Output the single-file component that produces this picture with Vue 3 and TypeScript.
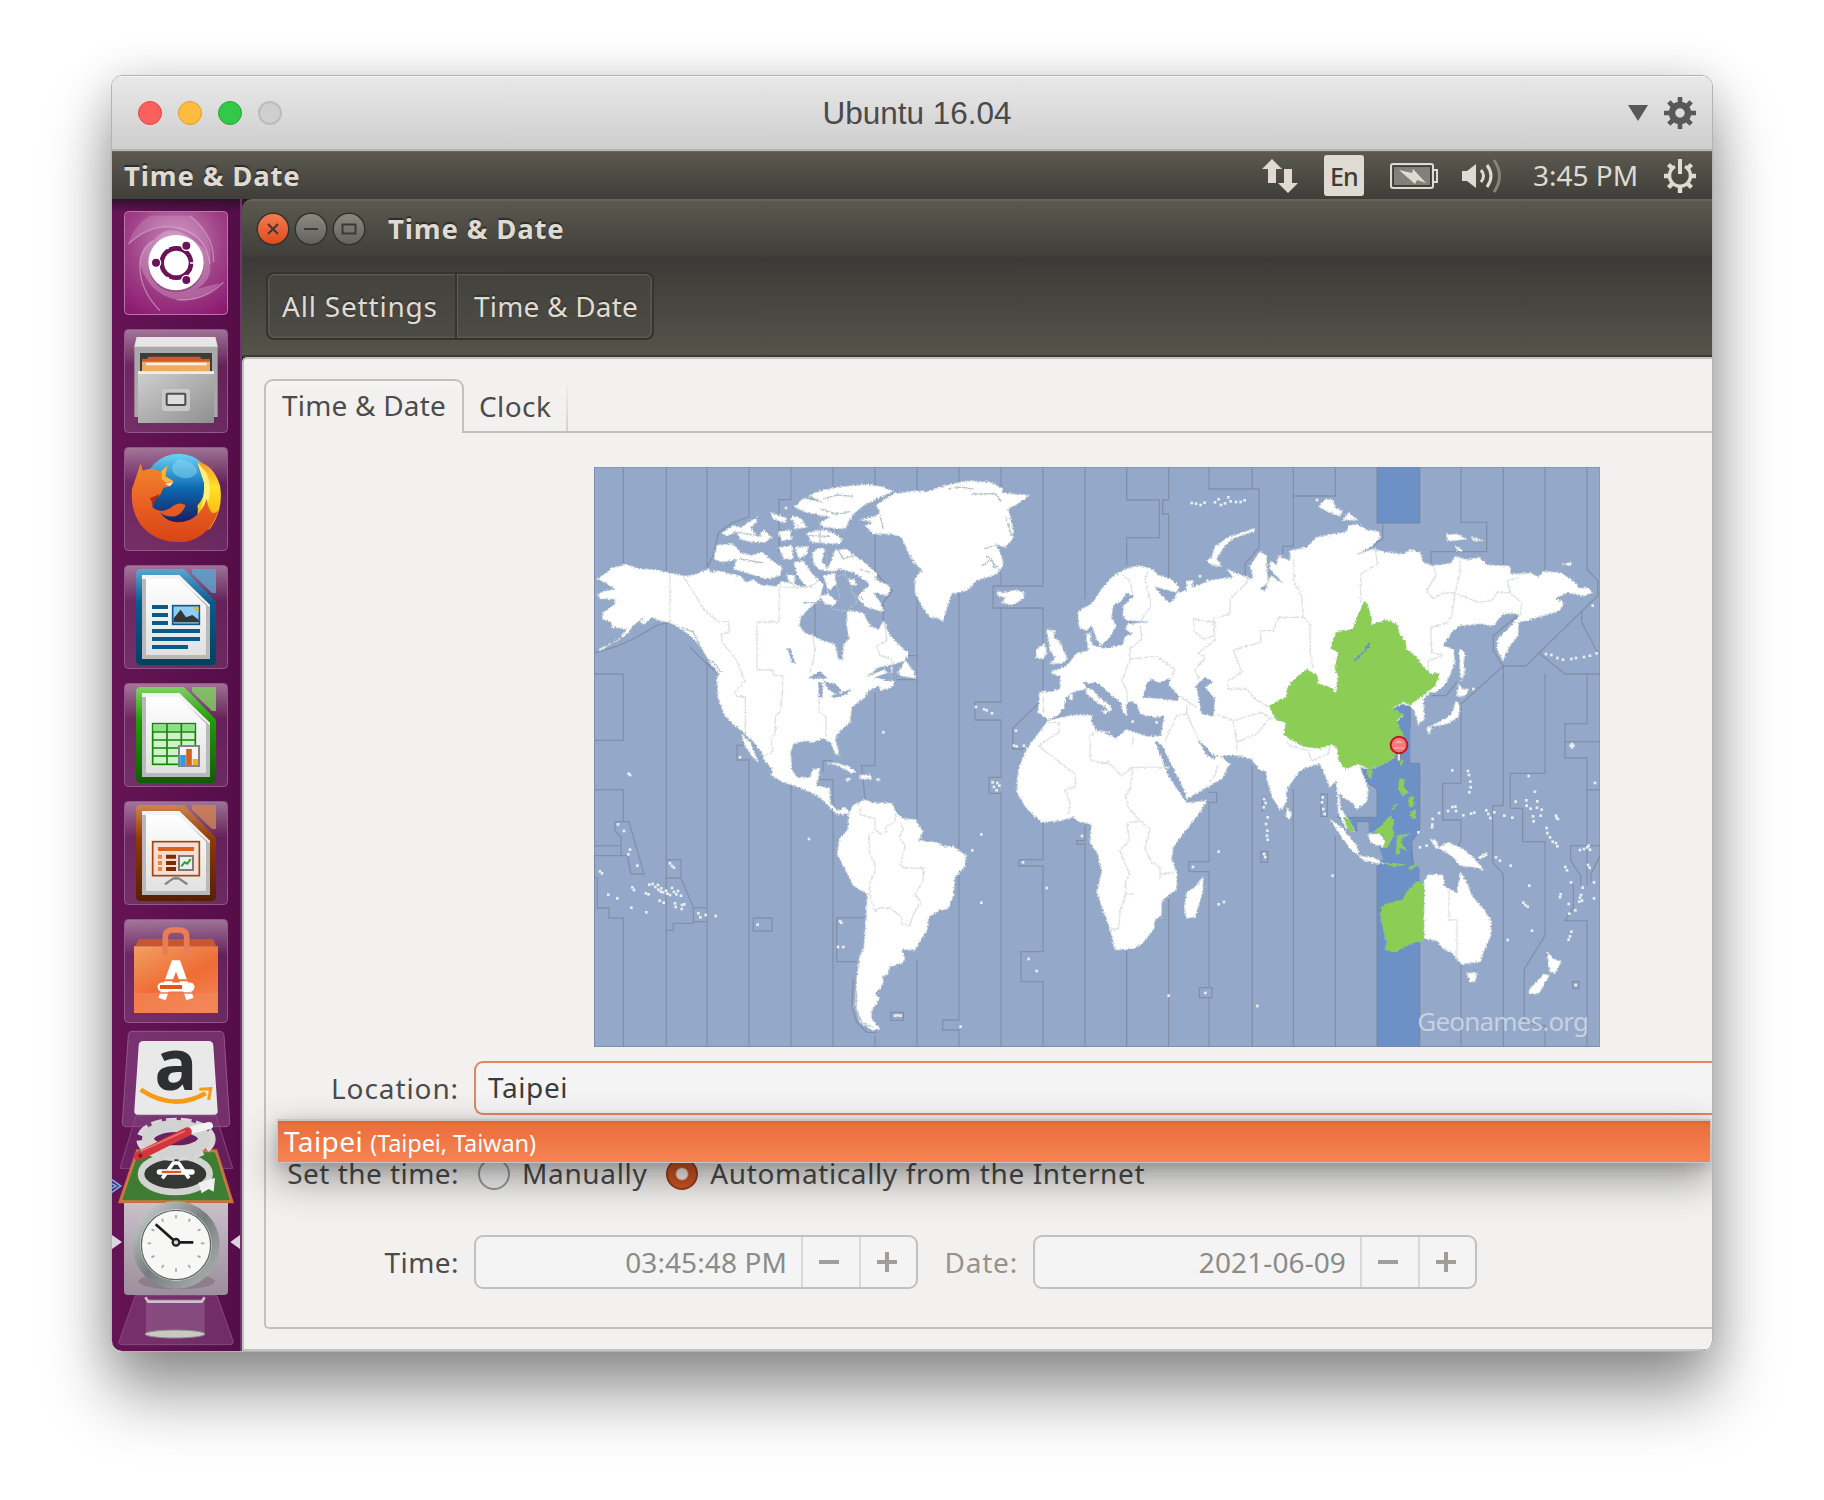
<script setup lang="ts">
type Zone = { d: string }

// Time-zone boundaries, western half then eastern half (shifted by 1500 units)
const zonesWest: Zone[] = [
  'M12 24V1763', 'M100 24V318', 'M12 582L80 562L130 540L205 497L240 490', 'M12 645H100V844H12', 'M12 992H100V1088',
  'M75 1088H117L162 1245H123L112 1190H93V1135L75 1115ZM12 1160H93M12 1190H115', 'M12 1190V1255H22V1347H57V1377H100V1763',
  'M229 24V340M229 495V1763', 'M229 1202H273V1257H229M273 1257L310 1345V1393H250V1414H229', 'M310 1346H351M310 1388H351',
  'M351 24V325L370 290L385 222L420 195L477 173M351 610V1763', 'M477 24V173M477 900V1763M477 903H441V859H460',
  'M603 24V122H567V278M603 980V1763', 'M729 24V100M729 905H699V940M680 962H729V1763M729 1062', 'M740 1376H832M740 1376V1508H800',
  'M855 24V100M855 220V340L908 395L880 430V490M855 700V920H815L825 1020M855 1730V1763', 'M981 24V95M981 400V590H950M981 590V662H920M981 662V1080M981 1500V1763',
  'M1107 24V70M1107 400V1683H1058V1713H1107V1763', 'M1233 24V95M1233 340V381H1359M1359 24V381M1209 381H1240M1209 381V447H1359V720L1268 808V870H1300',
  'M1233 447V729H1155V783H1233V955H1197V1003H1233V1763', 'M1359 1090V1202H1287V1221H1359V1478H1293V1568H1359V1763', 'M1485 24V420M1485 1088V1145H1460V1155H1485V1763',
  'M490 1377H546V1416H490ZM903 1660H940V1684H903Z', 'M675 430V540M300 565L330 595L380 640', 'M790 1560L785 1640L800 1690L830 1720H860',
].map(d => ({ d }))

const zonesEast: Zone[] = [
  'M110 24V123H208V236H110V320', 'M236 24V123H218V165H236V360', 'M357 24V90H507V265L465 315V350', 'M487 24V90',
  'M610 24V262H578V285M610 111H736V24', 'M861 24V192H989V24', 'M878 192V240L840 265', 'M1113 24V190H1190V278H1023V315',
  'M1240 24V320', 'M1365 24V340', 'M1491 24V330L1523 365V410L1307 621H1240L1210 575V530L1290 465', 'M1475 455V490L1525 585',
  'M1348 583L1425 645H1530', 'M1240 621L1113 735V973H1058V1083H1113V1145L1105 1160', 'M1100 670L1068 710H1025', 'M1240 621V1040H1208V1210L1240 1245V1763',
  'M1365 645V943H1261V1048H1298V1148H1365V1430L1303 1530V1690L1365 1700V1763', 'M1491 645V794H1425V897H1491V1280M1425 848H1530', 'M1491 993H1530',
  'M1530 1160H1442V1205L1472 1250V1280M1530 1190L1503 1245V1270M1450 1275V1345L1425 1385H1491V1763', 'M961 740V805', 'M950 913H989V1110L965 1150V1210',
  'M861 1075V990L830 970M740 1075H861M800 1120V1088H838V1120', 'M736 1130V1763', 'M610 990V1763', 'M487 920V1763', 'M530 1015H517V1060M513 1177H533V1210H513Z', 'M693 1005H712V1072H693Z',
  'M357 1000H380V1030H357V1208H297V1238H357V1586M328 1586H366V1616H328ZM357 1616V1763', 'M236 1320V1763', 'M110 1475V1763', 'M861 1220V1763M989 1450V1763', 'M1113 1520V1763', 'M1448 1568H1467V1589H1448Z', 'M3 1090V1140', 'M12 24H1530V1763H-1488V24Z',
].map(d => ({ d }))

const landWest: string[] = [
  // North America
  'M22 360L50 340L62 328L110 316L150 330L190 332L235 340L285 352L320 345L355 330L362 340L385 335L420 345L450 350L470 370L490 362L512 378L560 382L575 367L600 372L640 385L665 380L672 350L700 375L690 420L660 445L632 475L628 500L645 522L672 532L690 542L735 556L745 600L757 603L760 558L778 540L770 500L772 455L800 458L820 462L840 500L865 512L880 488L900 530L930 560L955 582L945 605L905 617L868 625L830 652L885 632L895 660L915 668L905 685L872 695L866 680L835 695L825 715L785 745L780 790L745 822L735 840L748 885L738 887L722 850L700 838L670 850L640 846L610 855L602 880L605 930L620 955L660 955L668 932L690 928L685 955L678 980L720 987L720 1035L745 1055L765 1045L778 1060L770 1066L740 1065L710 1035L690 1015L650 995L620 982L580 970L545 950L545 930L525 905L515 880L492 850L460 820L435 800L405 770L385 720L380 660L388 645L360 610L330 560L300 530L260 500L235 490L210 485L185 475L165 495L150 490L160 475L130 500L105 530L70 550L30 575L25 572L90 540L110 510L65 505L65 490L35 480L40 460L75 435L75 420L30 420L22 405L50 395L75 390L45 370Z',
  'M455 825L480 850L505 908L490 897L466 862Z',
  // Greenland
  'M812 182L855 172L870 160L858 138L910 105L980 95L1010 98L1070 78L1140 65L1200 70L1240 90L1235 102L1280 106L1318 108L1290 130L1255 150L1262 180L1270 215L1268 240L1245 265L1215 255L1235 290L1240 320L1220 345L1160 365L1130 395L1085 405L1070 450L1058 487L1045 478L1020 475L995 440L975 400L975 360L995 330L968 310L950 270L935 235L905 225L850 225L825 200L850 190Z',
  'M1223 395L1240 402L1275 393L1303 400L1300 420L1265 438L1235 430L1245 417L1224 410Z',
  // Canadian archipelago
  'M655 110L690 95L740 85L830 76L880 84L910 97L870 115L820 140L790 165L775 190L765 210L700 205L690 190L720 175L650 160L615 145L640 118L700 130Z',
  'M612 210L650 205L640 190L615 182ZM650 222L700 212L730 222L755 240L750 255L665 250Z',
  'M540 160L590 178L585 192L550 180ZM598 178L615 170L640 185L625 200ZM565 218L600 212L605 240L575 245Z',
  'M395 222L430 200L455 205L500 175L500 190L480 205L505 235L520 212L545 235L525 250L480 248L450 240L440 218L410 232Z',
  'M372 300L380 258L430 255L450 280L485 290L515 278L540 300L575 325L570 350L530 360L480 345L430 330L440 300L400 310Z',
  'M567 265L605 260L610 300L580 300ZM615 265L655 262L650 285L628 300ZM612 310L640 305L660 335L685 370L650 385L620 345ZM590 345L615 350L612 375L598 368Z',
  'M668 280L690 265L705 270L695 310L715 325L735 275L770 270L800 295L830 315L860 345L855 360L905 385L890 410L850 400L870 430L880 458L830 445L800 415L820 395L840 375L790 340L750 330L725 338L685 330L670 310Z',
  'M700 350L735 342L740 375L715 395ZM690 412L715 405L745 430L740 440L705 435ZM775 360L795 362L800 378L780 382Z',
  'M925 640L945 605L970 635L977 658L930 650Z',
  // Caribbean
  'M712 912L740 912L780 925L798 940L785 942L745 920ZM812 948L842 948L845 960L812 960ZM768 958h12v6h-12ZM860 958h10v6h-10Z',
  // South America
  'M775 1065L790 1038L825 1022L850 1032L905 1032L918 1060L940 1080L975 1080L1000 1120L985 1145L1040 1150L1060 1162L1090 1163L1128 1190L1125 1220L1095 1255L1090 1310L1072 1350L1050 1353L1015 1375L1012 1410L975 1473L935 1472L945 1500L938 1513L900 1522L895 1545L878 1552L880 1570L868 1592L855 1605L868 1620L845 1655L845 1680L870 1710L845 1712L810 1690L795 1640L800 1560L808 1500L822 1460L828 1380L832 1305L790 1280L765 1230L742 1185L748 1140L775 1110Z',
  // British Isles
  'M1370 512L1395 515L1390 535L1408 545L1432 600L1420 612L1380 615L1395 595L1380 575ZM1340 570L1365 552L1370 580L1362 598L1338 598Z',
]

const landEast: string[] = [
  // Eurasia and Africa
  'M-35 460L-25 450L5 435L35 390L70 350L95 338L120 325L150 320L185 330L205 348L245 362L268 385L258 400L215 388L195 385L215 410L235 430L250 425L262 400L290 395L290 365L310 365L305 385L370 362L430 355L410 330L470 355L490 360L480 320L510 278L530 290L530 325L535 370L510 390L525 395L542 350L578 372L540 330L542 305L560 320L565 290L600 305L600 275L650 265L680 235L770 218L775 200L800 195L830 212L865 218L872 235L845 262L805 285L850 270L890 280L940 285L960 272L990 280L1000 310L1025 320L1085 312L1095 292L1130 302L1170 296L1190 318L1260 322L1262 345L1325 342L1345 355L1360 338L1410 340L1450 365L1470 390L1490 383L1508 400L1480 412L1435 400L1395 418L1420 430L1410 455L1360 470L1310 485L1285 490L1285 530L1260 560L1238 605L1222 570L1222 540L1250 515L1288 470L1275 463L1240 465L1210 500L1170 495L1110 500L1085 520L1058 560L1090 572L1095 610L1070 670L1040 700L1020 700L1000 720L1003 780L985 797L975 760L960 740L935 735L905 750L940 770L920 790L935 830L930 870L905 900L870 920L840 930L810 925L820 950L835 990L830 1030L800 1050L790 1035L755 1010L748 1000L752 1050L775 1080L795 1118L770 1110L745 1065L742 1000L738 965L720 985L710 960L690 915L665 920L630 935L590 990L590 1030L570 1055L545 1010L530 960L528 935L510 935L485 900L440 890L390 890L420 915L395 960L350 985L290 1020L290 1032L350 1025L330 1060L290 1110L250 1165L245 1200L260 1240L260 1290L215 1325L215 1370L195 1382L192 1410L160 1450L130 1470L75 1473L60 1410L45 1370L20 1300L35 1240L25 1190L0 1150L3 1095L-30 1090L-50 1075L-90 1085L-145 1090L-190 1050L-220 1000L-215 930L-190 870L-160 830L-130 790L-125 782L-155 760L-152 700L-110 697L-90 690L-90 655L-118 640L-70 620L-40 583L-5 575L-12 525L2 520L5 545L20 540L5 500L-10 515L-33 505Z',
  'M350 305L365 295L375 262L420 232L495 208L490 218L430 238L400 265L380 300L395 322L365 318Z',
  'M685 145L705 122L730 122L735 145L757 155L750 172L715 158ZM758 185L775 160L803 182ZM1068 228L1100 225L1130 240L1075 248ZM1145 235L1180 245L1150 246ZM1095 262L1120 275L1105 278ZM1418 315L1445 310L1440 320Z',
  'M1108 570L1125 580L1120 620L1125 635L1115 665L1110 640ZM1098 710L1105 690L1105 675L1118 690L1138 690L1125 710L1108 712ZM1098 725L1110 740L1105 775L1070 795L1040 800L1015 805L1060 782L1085 765ZM1008 808L1025 803L1018 828Z',
  'M590 1045L605 1065L600 1080L588 1075ZM340 1250L338 1300L315 1375L290 1378L283 1350L290 1300L320 1280Z',
  'M720 1080L760 1110L800 1160L808 1190L785 1175L745 1120ZM805 1192L850 1195L882 1215L830 1208ZM835 1125L870 1125L888 1150L880 1165L840 1150Z',
  'M1020 1140L1040 1145L1045 1165L1075 1150L1120 1170L1155 1200L1180 1232L1150 1225L1110 1220L1090 1195L1060 1175L1035 1165ZM1165 1195L1190 1180L1192 1190L1170 1200Z',
  'M1002 1265L1015 1245L1060 1248L1062 1280L1100 1302L1112 1240L1130 1270L1145 1310L1180 1350L1203 1385L1203 1430L1180 1480L1172 1508L1115 1515L1085 1480L1060 1470L1040 1445L1002 1440Z',
  'M1130 1542L1162 1542L1155 1568L1142 1570ZM1372 1478L1390 1500L1413 1508L1395 1545L1378 1535ZM1362 1545L1378 1550L1345 1605L1318 1603L1316 1592Z',
]

const greens: string[] = [
  'M823 427L833 440L845 480L842 497L870 490L888 482L920 495L930 530L945 545L950 573L975 590L1000 625L1020 645L1048 643L1035 680L1000 708L960 738L940 728L905 748L925 760L942 768L920 785L940 830L935 870L900 905L870 920L840 930L805 915L765 930L745 900L742 865L725 855L690 868L640 862L600 840L582 828L588 790L560 783L537 742L570 722L592 715L592 685L620 655L650 632L680 648L685 675L720 685L738 703L745 650L735 630L745 580L722 568L740 520L790 510L800 478Z',
  'M830 932L848 935L842 962L832 945ZM928 895L940 905L932 920ZM930 960L943 960L940 985L955 1000L940 1010L925 990ZM955 1020L970 1010L972 1040L958 1045ZM960 1060L975 1050L978 1075L965 1078ZM905 1050L922 1032L908 1055Z',
  'M850 1120L870 1105L900 1070L912 1085L905 1105L912 1125L890 1168L880 1165L888 1145L875 1125ZM760 1075L778 1082L792 1115L775 1115ZM922 1130L960 1125L935 1138L935 1155L950 1175L930 1165L928 1185L918 1185ZM955 1228L985 1212L965 1230ZM880 1212L945 1216L910 1222Z',
  'M875 1345L890 1335L940 1322L945 1305L980 1268L1001 1272V1443L960 1455L920 1478L885 1473L890 1450L873 1380Z',
]

const waterEast: string[] = [
  // Mediterranean
  'M-128 785L-95 768L-78 745L-72 715L-50 700L-12 690L15 715L-5 690L-20 672L20 672L40 685L60 705L92 730L100 765L112 770L108 735L120 728L140 735L150 765L190 775L222 773L212 830L170 832L110 810L80 838L20 812L3 785L8 768L-55 768Z',
  'M-2 520L8 558L40 568L98 558L105 530L125 525L108 512L110 495L172 489L108 484L98 470L100 440L130 412L110 402L95 425L70 440L65 475L78 500L60 535L32 560L18 540L5 535Z',
  'M158 715L170 675L185 660L205 672L240 658L238 680L268 712L262 725L200 718ZM318 680L345 655L368 668L345 685L375 720L370 770L335 765L325 710ZM195 845L215 858L248 925L285 1000L290 1030L272 1005L235 950ZM325 845L350 865L370 890L385 888L372 900L350 888Z',
]
const waterWest: string[] = [
  'M655 658L690 637L712 658ZM685 672L697 670V715H687ZM700 665L735 675L755 695L740 705L720 695ZM725 712L785 690L770 705L735 718ZM592 568L602 570L615 612L608 612ZM735 352L765 345L790 395L800 430L770 455L720 450L750 420ZM855 655L900 640L905 668L885 662Z',
]

const bordersWest: string[] = [
  'M240 340V490', 'M280 352L310 400L345 455L385 488H417V522H395V548L440 605L465 665L435 700L440 712H466V830', 'M567 385H680M567 385V489H501V633H548L552 650H578V700L570 760L557 770L555 825L543 835L548 880L525 890',
  'M668 530L675 580L660 640M688 720V760L708 775V835M885 490L890 545L860 560L870 590L905 598V640', 'M808 1035L812 1068L855 1078V1110L870 1125L890 1118L888 1102L915 1088L918 1060M855 1118L838 1125V1180L855 1215V1240L840 1270V1310L855 1358L865 1347H900L935 1375V1395L960 1400L968 1370L993 1330L975 1305L1000 1265V1227H940L932 1215L945 1160L928 1135L940 1110L930 1090',
  'M1360 710V765M1368 790H1408V820L1345 860L1455 945V985L1425 992L1440 1030L1435 1070M1500 900V830L1520 815L1560 820M1500 900L1540 915L1560 905',
]
const bordersEast: string[] = [
  'M95 345L120 365L128 405M175 335L165 360L183 440L150 490L155 540L120 570V600L95 665L110 695L112 735', 'M120 600L200 592L255 632L240 665', 'M470 350L472 370L420 420V465L370 478L375 545L325 580L345 595L315 635L330 665', 'M310 480L375 490L372 530L340 540L312 515Z',
  'M610 300L612 370L635 410L640 475H565L550 515H512V550L430 573L440 600L455 640L415 665V690L470 690L495 720L540 745', 'M640 475L660 495V580L670 630', 'M855 265L862 315L812 345V430', 'M1030 320L1038 350L1010 395L1030 420L1060 402H1095L1110 340V300M1095 402L1165 430L1205 425L1222 400L1260 402L1295 430L1290 470M1260 402L1252 365L1290 355',
  'M1095 402L1085 470L1075 490L1022 505L1025 580L1060 590L1015 605V640M270 712L320 745M290 765V735M225 845L260 770L290 765L325 840M380 765L430 785L515 760L545 780M430 785L440 850L500 825L540 775M440 850V880M590 845L600 860L655 875L665 905L715 885L720 860',
  'M0 905L60 915L95 950L128 925H240M128 925L120 990L105 1010L115 1045L150 1085M115 1090L150 1085L180 1110L165 1170L185 1210L210 1225V1260M110 1090L118 1145L90 1175L105 1215L120 1245L105 1270L108 1305H130M108 1305L92 1350L85 1410H65M215 1245L258 1240M385 915L375 950L358 970M1077 1290V1383H1101V1510M128 835V860',
]

type Dot = [number, number]
const dotsWest: Dot[] = [[84, 1096], [102, 1116], [120, 1172], [115, 1186], [142, 1220], [30, 1237], [36, 1243], [55, 1307], [82, 1318], [127, 1285], [132, 1293], [124, 1346], [169, 1360], [240, 1213], [246, 1221], [252, 1226], [178, 1277], [188, 1275], [196, 1284], [204, 1278], [205, 1292], [214, 1288], [219, 1300], [212, 1298], [228, 1295], [232, 1304], [240, 1308], [246, 1287], [252, 1299], [259, 1306], [264, 1296], [273, 1310], [168, 1303], [176, 1306], [209, 1325], [221, 1331], [255, 1333], [257, 1344], [276, 1338], [275, 1350], [283, 1336], [325, 1363], [331, 1375], [347, 1368], [377, 1371], [503, 1397], [657, 1140], [750, 1387], [754, 1391], [744, 1464], [760, 1464], [116, 944], [120, 948], [1174, 1126], [1147, 1174], [1174, 1331], [1299, 1210], [1370, 1287], [1316, 1500], [1340, 1536], [1158, 744], [1182, 751], [1190, 754], [1206, 763], [1208, 970], [1222, 972], [1212, 984], [1228, 980], [1220, 994], [915, 1670], [923, 1669], [932, 1670], [1112, 1703], [1278, 815], [1272, 860], [1280, 862], [1302, 860], [880, 820], [588, 147], [450, 895], [1476, 1131]]
const dotsEast: Dot[] = [[305, 132], [318, 134], [332, 138], [344, 131], [375, 130], [386, 121], [393, 138], [405, 133], [415, 115], [422, 127], [438, 129], [452, 129], [464, 124], [330, 352], [352, 365], [681, 123], [522, 1020], [527, 1032], [521, 1045], [533, 1075], [528, 1095], [532, 1115], [531, 1130], [533, 1142], [522, 1185], [526, 1194], [698, 1015], [696, 1030], [700, 1050], [704, 1065], [386, 1178], [309, 1224], [386, 1336], [402, 1329], [236, 1610], [346, 1602], [502, 1641], [728, 1250], [1087, 934], [1134, 936], [1137, 948], [1141, 968], [1142, 985], [1138, 1000], [1028, 1080], [1027, 1097], [1026, 1105], [1047, 1062], [1074, 1056], [1087, 1044], [1096, 1043], [1098, 1056], [1120, 1069], [1143, 1064], [1153, 1061], [1189, 1054], [1195, 1065], [1201, 1077], [1213, 1060], [1243, 1070], [1267, 1076], [1277, 1028], [1309, 1024], [1310, 1040], [1322, 1049], [1335, 998], [1342, 1027], [1341, 1046], [1355, 1052], [1329, 1072], [1331, 1087], [1352, 1070], [1316, 951], [1400, 1077], [1398, 1070], [1404, 1080], [1370, 1107], [1372, 1122], [1380, 1135], [1388, 1148], [1398, 1152], [1402, 1162], [1515, 972], [1442, 860], [1450, 860], [1446, 855], [1446, 865], [1470, 1173], [1482, 1170], [1492, 1165], [1500, 1172], [1496, 1160], [1426, 1224], [1431, 1234], [1494, 1218], [1499, 1226], [1443, 1270], [1412, 1306], [1410, 1315], [1436, 1335], [1478, 1286], [1473, 1308], [1470, 1316], [1468, 1328], [1476, 1325], [1456, 1354], [1438, 1364], [1512, 1270], [1512, 1318], [1444, 1418], [1440, 1432], [1436, 1442], [1326, 1415], [1300, 1331], [1306, 1338], [1313, 1343], [1218, 1195], [1230, 1205], [1262, 1220], [1318, 1280], [1253, 1443], [1457, 1578], [1368, 585], [1384, 588], [1402, 597], [1419, 602], [1444, 600], [1458, 597], [1482, 594], [1500, 590], [1520, 583], [1508, 440], [985, 1120], [990, 1165], [1010, 1160], [128, 788], [200, 790], [1150, 690]]

const stepper = { time: '03:45:48 PM', date: '2021-06-09' }
const docs = [
  { id: 'writer', top: '#5aa6cf', mid: '#075b90', low: '#02405f' },
  { id: 'calc', top: '#7fd160', mid: '#1f9c07', low: '#0f5d04' },
  { id: 'impress', top: '#cf8450', mid: '#8f3906', low: '#552003' },
]
const hourTicks = Array.from({ length: 12 }, (_, i) => i * 30)
</script>

<template>
  <main class="stage">
    <section class="window">
      <header class="mac-bar">
        <div class="lights"><i class="red" /><i class="amber" /><i class="lime" /><i class="off" /></div>
        <h1>Ubuntu 16.04</h1>
        <div class="mac-tools">
          <svg width="20" height="16" viewBox="0 0 20 16"><path d="M0 0H20L10 16Z" fill="#585858" /></svg>
          <svg width="32" height="32" viewBox="-16 -16 32 32">
            <g stroke="#585858" stroke-width="4.6"><path d="M0-16V-8M0 16V8M-16 0H-8M16 0H8M-11.2-11.2L-6-6M11.2 11.2L6 6M-11.2 11.2L-6 6M11.2-11.2L6-6" /></g>
            <circle r="8" fill="none" stroke="#585858" stroke-width="6.5" />
          </svg>
        </div>
      </header>

      <div class="panel">
        <b class="panel-title">Time &amp; Date</b>
        <div class="indicators">
          <svg class="i-net" width="36" height="36" viewBox="0 0 36 36" fill="#dfdbd2"><path d="M10 1L20 11H14V25H6V11H0ZM26 35L16 25H22V11H30V25H36Z" /></svg>
          <span class="i-lang">En</span>
          <svg class="i-bat" width="48" height="26" viewBox="0 0 48 26">
            <rect x="1" y="1" width="42" height="24" rx="2" fill="none" stroke="#dfdbd2" stroke-width="2" />
            <rect x="3.5" y="3.5" width="37" height="19" fill="#81807a" stroke="#3c3b37" />
            <path d="M44 7H47V19H44" fill="none" stroke="#dfdbd2" stroke-width="2" />
            <path d="M9 7L22 10L23 6L36 20L27 17L25 21Z" fill="#dfdbd2" />
          </svg>
          <svg class="i-vol" width="40" height="36" viewBox="0 0 40 36">
            <path d="M0 13H5L14 6V30L5 23H0Z" fill="#dfdbd2" />
            <g fill="none" stroke="#dfdbd2" stroke-width="3"><path d="M19 12Q24 18 19 24" /><path d="M25 7Q33 18 25 29" /><path d="M32 2Q43 18 32 34" stroke="#85837c" /></g>
          </svg>
          <span class="i-time">3:45 PM</span>
          <svg class="i-gear" width="32" height="34" viewBox="-16 -17 32 34" fill="none" stroke="#dfdbd2">
            <path d="M-5-9.5A10.5 10.5 0 1 0 5-9.5" stroke-width="3.5" />
            <path d="M0-17V-2" stroke-width="4" />
            <path d="M0 11V17M-16 0H-11M16 0H11M-11.5 11.5L-8 8M11.5 11.5L8 8M-11.5-11.5L-7-7M11.5-11.5L7-7" stroke-width="4.4" />
          </svg>
        </div>
      </div>

      <div class="desktop">
        <nav class="dock">
          <svg width="0" height="0" class="defs">
            <defs>
              <linearGradient id="gloss" x2="0" y2="1"><stop offset="0" stop-color="#fff" stop-opacity=".42" /><stop offset=".35" stop-color="#fff" stop-opacity=".08" /><stop offset="1" stop-color="#fff" stop-opacity=".12" /></linearGradient>
              <radialGradient id="dash" cx=".5" cy=".3" r=".8"><stop offset="0" stop-color="#c98abb" /><stop offset=".55" stop-color="#a04389" /><stop offset="1" stop-color="#8c1a70" /></radialGradient>
              <linearGradient id="steel" x1="0" x2="1" y2="1"><stop offset="0" stop-color="#d0d0d0" /><stop offset="1" stop-color="#8f8f8f" /></linearGradient>
              <linearGradient id="paper" x2="0" y2="1"><stop offset="0" stop-color="#fff" /><stop offset="1" stop-color="#e1e1e1" /></linearGradient>
              <linearGradient id="globe" x2="0" y2="1"><stop offset="0" stop-color="#6fd2f6" /><stop offset=".5" stop-color="#0b69b2" /><stop offset="1" stop-color="#1b1c5c" /></linearGradient>
              <linearGradient id="fox" x2="0" y2="1"><stop offset="0" stop-color="#f08a2c" /><stop offset=".5" stop-color="#ea6024" /><stop offset="1" stop-color="#d84414" /></linearGradient>
              <linearGradient id="flame" x2="0" y2="1"><stop offset="0" stop-color="#f29a2e" /><stop offset=".35" stop-color="#ffe226" /><stop offset=".65" stop-color="#fcc419" /><stop offset="1" stop-color="#ea6a1c" /></linearGradient>
              <linearGradient id="bag" x1="0" x2=".6" y2="1"><stop offset="0" stop-color="#f0a060" /><stop offset=".6" stop-color="#ef6c35" /><stop offset="1" stop-color="#f28050" /></linearGradient>
              <linearGradient id="active" x2="0" y2="1"><stop offset="0" stop-color="#c9bfc9" /><stop offset="1" stop-color="#9c8e9c" /></linearGradient>
              <linearGradient id="rim" x2="1" y2="1"><stop offset="0" stop-color="#cfd3d3" /><stop offset=".5" stop-color="#777d7e" /><stop offset="1" stop-color="#aeb3b3" /></linearGradient>
              <linearGradient v-for="d in docs" :id="d.id" :key="d.id" x2="0" y2="1"><stop offset="0" :stop-color="d.top" /><stop offset=".35" :stop-color="d.mid" /><stop offset="1" :stop-color="d.low" /></linearGradient>
            </defs>
          </svg>

          <svg class="tile" viewBox="42 36 312 312">
            <rect x="43.5" y="37.5" width="309" height="309" rx="12" fill="url(#dash)" stroke="#bf73ae" stroke-width="3" />
            <path d="M55 135Q130 65 215 90Q290 115 300 195Q315 110 240 50H120Q70 80 55 135Z" fill="#fff" opacity=".14" />
            <path d="M90 190Q95 145 130 125Q180 60 260 130Q300 160 300 195Q310 240 260 270Q290 262 330 252Q280 310 200 302Q140 290 110 240Q95 220 90 190Z" fill="#fff" opacity=".22" />
            <g fill="none" stroke="#e0b4d6" stroke-width="4" opacity=".55"><path d="M55 135Q130 65 215 90Q290 115 300 195" /><path d="M240 50Q315 110 310 190" /><path d="M150 335Q85 270 90 190Q95 145 130 125" /><path d="M340 250Q280 310 200 302" /></g>
            <circle cx="198" cy="196" r="84" fill="#5a0f48" opacity=".3" />
            <circle cx="198" cy="191" r="83" fill="#fff" />
            <circle cx="199" cy="192" r="44" fill="none" stroke="#6a1358" stroke-width="14" />
            <g stroke="#fff" stroke-width="5"><path d="M175 150L165 133M175 234L165 250M240 192H256" /></g>
            <g fill="#6a1358" stroke="#fff" stroke-width="4"><circle cx="138" cy="191" r="14" /><circle cx="229" cy="140" r="14" /><circle cx="229" cy="243" r="14" /></g>
          </svg>

          <svg class="tile" viewBox="42 390 312 312">
            <rect class="plate" x="43.5" y="391.5" width="309" height="309" rx="12" />
            <path d="M80 414H316L323 445V654H73V445Z" fill="#a9a9a9" /><path d="M80 414H316L323 443H73Z" fill="#e6e6e6" />
            <rect x="90" y="462" width="216" height="60" fill="#3d3c3a" />
            <path d="M96 480H110L116 473H270L275 480H300V520H96Z" fill="#d2582d" /><path d="M96 488H300V520H96Z" fill="#efab5f" /><path d="M108 495H290" stroke="#fbf1e6" stroke-width="7" />
            <path d="M84 517H312V672H84Z" fill="url(#steel)" /><path d="M84 521H312" stroke="#ededed" stroke-width="8" />
            <rect x="156" y="570" width="84" height="66" rx="8" fill="#c9c9c9" /><rect x="170" y="584" width="56" height="34" rx="3" fill="#ddd" stroke="#4c4c4c" stroke-width="6" />
          </svg>

          <svg class="tile" viewBox="42 744 312 312">
            <rect class="plate" x="43.5" y="745.5" width="309" height="309" rx="12" />
            <circle cx="206" cy="868" r="104" fill="url(#globe)" />
            <path d="M205 780Q255 785 262 820Q240 850 200 830Q170 810 205 780Z" fill="#8fdcf7" opacity=".45" />
            <path d="M262 788Q310 795 330 860Q342 930 300 990L240 1005Q270 950 262 920Q290 890 282 850Z" fill="url(#flame)" />
            <path d="M262 790L290 822Q312 880 285 930L265 962Q285 905 282 850Z" fill="#fff07a" />
            <path d="M92 793L98 815Q130 802 152 818L172 800L165 832L192 848L180 862L160 866L150 890L124 897L128 925Q150 945 180 928Q205 905 226 918Q222 940 196 952Q165 955 150 940Q180 985 240 962Q275 945 290 900Q300 960 325 935Q300 1010 230 1028Q140 1038 90 975Q60 930 66 870L78 835Z" fill="url(#fox)" />
            <path d="M155 815L172 800L166 832L190 846L170 852L155 840Z" fill="#f7b53c" /><path d="M165 855L190 848L180 862Z" fill="#fde9d3" /><path d="M120 897L150 885L145 895Q130 905 132 925Z" fill="#a6321b" />
          </svg>

          <svg v-for="d in docs" :key="d.id" class="tile" viewBox="42 18 312 312">
            <rect class="plate" x="43.5" y="19.5" width="309" height="309" rx="12" />
            <path d="M92 30H222L318 128V304Q318 318 304 318H92Q78 318 78 304V44Q78 30 92 30Z" :fill="`url(#${d.id})`" />
            <path d="M246 30H318V102H306L246 44Z" :fill="d.top" opacity=".8" />
            <path d="M96 48H208L300 138V300H96Z" fill="#b9b9b9" /><path d="M108 60H208L288 140V288H108Z" fill="url(#paper)" /><path d="M96 48H208L300 138V145L204 60H96Z" fill="#f3f3f3" />
            <g v-if="d.id === 'writer'">
              <path d="M126 144H174M126 168H174M126 192H174M126 216H270M126 240H270M126 264H234" stroke="#075b90" stroke-width="12" />
              <rect x="188" y="140" width="80" height="56" fill="#8ecdf4" stroke="#075b90" stroke-width="5" /><path d="M247 143H266V162Z" fill="#d5ba44" /><path d="M191 190V178L212 152L228 175L247 168L266 182V190Z" fill="#363636" />
            </g>
            <g v-else-if="d.id === 'calc'">
              <rect x="128" y="140" width="128" height="122" fill="#cdf3c6" stroke="#15850a" stroke-width="5" /><path d="M130 142H254V163H130Z" fill="#8ee085" />
              <path d="M128 165H256M128 189H256M128 213H256M128 237H256M171 140V262M214 140V262" stroke="#15850a" stroke-width="5" />
              <rect x="207" y="207" width="60" height="60" fill="#f5f5f5" stroke="#858585" stroke-width="6" /><path d="M219 264V234" stroke="#2c9be0" stroke-width="17" /><path d="M237 264V216" stroke="#d7611d" stroke-width="17" /><path d="M256 264V246" stroke="#efb613" stroke-width="16" />
            </g>
            <g v-else>
              <rect x="128" y="140" width="140" height="102" fill="#f8ddd0" stroke="#a5440b" stroke-width="5" /><path d="M144 162H252" stroke="#d7611d" stroke-width="12" />
              <path d="M144 185H156M144 204H156M144 222H156" stroke="#e28750" stroke-width="12" /><path d="M168 185H198M168 204H198M168 222H198" stroke="#7e2c06" stroke-width="12" />
              <rect x="207" y="183" width="42" height="42" fill="#eee" stroke="#7c7c7c" stroke-width="6" /><path d="M214 214L224 202L232 206L242 192" fill="none" stroke="#27a52c" stroke-width="6" /><path d="M165 268L190 250H206L232 268M198 245V254" fill="none" stroke="#858585" stroke-width="7" />
            </g>
          </svg>

          <svg class="tile" viewBox="42 30 312 312">
            <rect class="plate" x="43.5" y="31.5" width="309" height="309" rx="12" />
            <path d="M86 90H310L318 112H76Z" fill="#c95535" /><path d="M72 112H324V312H72Z" fill="url(#bag)" /><path d="M72 252H324V312H72Z" fill="#f5895a" opacity=".6" />
            <path d="M166 137V84Q166 63 190 63H206Q230 63 230 84V137" fill="none" stroke="#ea7c58" stroke-width="17" />
            <g stroke="#fff" fill="none"><path d="M156 270L194 165H202L240 270" stroke-width="23" /></g>
            <path d="M140 214H256" stroke="#ef7038" stroke-width="6" /><path d="M156 234H240" stroke="#fff" stroke-width="27" stroke-linecap="round" /><path d="M140 252H256" stroke="#f07a48" stroke-width="5" /><path d="M150 234H216" stroke="#e0571b" stroke-width="12" />
          </svg>

          <svg class="stack" viewBox="6 345 390 978">
            <path d="M66 367H330Q340 367 342 380L359 640Q360 653 345 653H50Q36 653 37 640L55 380Q56 367 66 367Z" fill="#8b4c86" fill-opacity=".55" stroke="#93578e" stroke-width="3" />
            <path d="M100 396H296Q309 396 310 410L323 605Q324 617 312 617H84Q72 617 73 605L86 410Q87 396 100 396Z" fill="#e9e9ea" />
            <text x="198" y="542" text-anchor="middle" class="amazon">a</text>
            <path d="M92 542Q190 608 287 553" fill="none" stroke="#f79a16" stroke-width="14" /><path d="M268 541L302 539L296 573" fill="none" stroke="#f79a16" stroke-width="9" />
            <path d="M78 620H318L368 778H30Z" fill="#824080" fill-opacity=".35" stroke="#86497f" stroke-width="3" />
            <path d="M82 725H318L366 878H30Z" fill="#3f7c34" stroke="#f2843c" stroke-width="9" stroke-opacity=".75" />
            <ellipse cx="196" cy="795" rx="103" ry="54" fill="#353735" stroke="#d2d4d2" stroke-width="20" />
            <g stroke="#fff" fill="none"><path d="M157 808L190 762H206L237 808" stroke-width="11" /><path d="M148 789H246" stroke-width="16" stroke-linecap="round" /></g><path d="M155 789H213" stroke="#e0571b" stroke-width="7" />
            <path d="M265 821L315 807L311 848L296 840L275 853Z" fill="#f0f0f0" />
            <ellipse cx="198" cy="691" rx="102" ry="48" fill="none" stroke="#d7d7d7" stroke-width="34" stroke-dasharray="30 12" /><ellipse cx="198" cy="689" rx="84" ry="38" fill="none" stroke="#d2d2d2" stroke-width="36" />
            <path d="M250 662L298 650" stroke="#f2f2f2" stroke-width="22" stroke-linecap="round" /><path d="M232 668L85 742" stroke="#d2353c" stroke-width="27" stroke-linecap="round" /><path d="M225 666L92 727" stroke="#ee7378" stroke-width="5" /><circle cx="91" cy="740" r="6" fill="#6d1f22" />
            <path d="M42 882H354V1146Q354 1158 342 1158H54Q42 1158 42 1146Z" fill="url(#active)" />
            <ellipse cx="200" cy="1117" rx="115" ry="24" fill="#7d727d" opacity=".6" />
            <circle cx="198" cy="1008" r="119" fill="#f7f7f5" stroke="url(#rim)" stroke-width="24" /><circle cx="198" cy="1008" r="104" fill="none" stroke="#5f6869" stroke-width="4" />
            <path v-for="a in hourTicks" :key="a" d="M198 918V928" stroke="#a3a39f" stroke-width="5" :transform="`rotate(${a} 198 1003)`" />
            <path d="M137 946L198 1000H250" fill="none" stroke="#1c1c1c" stroke-width="8" /><circle cx="198" cy="1000" r="10" fill="#d8d8d8" stroke="#222" stroke-width="7" />
            <path d="M6 978L36 999L6 1020ZM390 978L361 999L390 1020Z" fill="#ddd5dd" /><path d="M6 812L32 831L6 850M6 824L18 831L6 838" fill="none" stroke="#67b5e8" stroke-width="5" />
            <path d="M76 1160H321L370 1298Q370 1307 360 1307H36Q24 1307 27 1297Z" fill="#8b4c86" fill-opacity=".5" stroke="#86497f" stroke-width="3" />
            <path d="M108 1170H284V1275H108Z" fill="#b28bae" fill-opacity=".3" /><path d="M106 1165L115 1178H275L284 1165" fill="none" stroke="#cbc3cb" stroke-width="8" /><ellipse cx="195" cy="1275" rx="90" ry="12" fill="#c7c9c2" stroke="#8d8b89" stroke-width="3" />
          </svg>
        </nav>

        <section class="app">
          <header class="app-bar">
            <span class="wb close"><svg viewBox="0 0 30 30"><path d="M10 10L20 20M20 10L10 20" /></svg></span>
            <span class="wb"><svg viewBox="0 0 30 30"><path d="M8 15H22" /></svg></span>
            <span class="wb"><svg viewBox="0 0 30 30"><path d="M8.500 10.500H21.500V19.500H8.500Z" /></svg></span>
            <b>Time &amp; Date</b>
          </header>
          <div class="toolbar"><div class="crumbs"><span class="c1">All Settings</span><span class="c2">Time &amp; Date</span></div></div>

          <div class="body">
            <div class="tabs"><span class="tab on">Time &amp; Date</span><span class="tab">Clock</span><span class="rest" /></div>
            <div class="frame">
              <svg class="map" width="1006" height="580" viewBox="12 24 3018 1740">
                <defs>
                  <filter id="coast" x="0" y="0" width="1" height="1" filterUnits="objectBoundingBox">
                    <feTurbulence type="fractalNoise" baseFrequency=".16" numOctaves="2" seed="4" />
                    <feDisplacementMap in="SourceGraphic" scale="11" xChannelSelector="R" yChannelSelector="G" />
                  </filter>
                </defs>
                <rect x="12" y="24" width="3018" height="1740" fill="#94a8c9" />
                <g transform="translate(1500)" fill="#6d91c6"><path d="M861 24H989V192H861ZM905 725H961V913H989V1110L965 1150L972 1210L989 1230V1763H861V1215L880 1200L850 1120H838V1088H800V1120L745 1075H861V990L820 965L815 915L905 850Z" /></g>
                <g class="zone"><path v-for="z in zonesWest" :key="z.d" :d="z.d" /></g>
                <g class="zone" transform="translate(1500)"><path v-for="z in zonesEast" :key="z.d" :d="z.d" /></g>
                <g filter="url(#coast)">
                  <rect x="12" y="24" width="3018" height="1740" fill="none" />
                  <g class="land"><path v-for="p in landWest" :key="p" :d="p" /></g>
                  <g class="land" transform="translate(1500)"><path v-for="p in landEast" :key="p" :d="p" /></g>
                  <g class="sea"><path v-for="p in waterWest" :key="p" :d="p" /></g>
                  <g class="sea" transform="translate(1500)"><path v-for="p in waterEast" :key="p" :d="p" /></g>
                  <g class="border"><path v-for="p in bordersWest" :key="p" :d="p" /></g>
                  <g transform="translate(1500)">
                    <path class="land" d="M-12 690L5 690L25 712L58 738L66 748L58 760L48 745L20 730L-10 705ZM-62 705L-52 705V722L-60 722ZM30 755L52 755L48 765Z" />
                    <g class="border"><path v-for="p in bordersEast" :key="p" :d="p" /></g>
                    <g class="picked"><path v-for="p in greens" :key="p" :d="p" /></g>
                    <path d="M836 548L838 565L800 604L792 602L820 578Z" fill="#6d91c6" />
                  </g>
                  <g class="fjord">
                    <path d="M700 120L740 108L790 112M690 150L740 165L780 158M660 230L720 232M430 218L520 232M450 300L520 312M690 185V250M710 270V330M1145 105L1215 104L1235 128M1175 320L1205 300L1215 330M1185 270L1210 260M870 170L880 210" />
                    <path d="M745 275L760 300L790 290M810 330L850 345M780 400L820 420M640 430L690 432M275 505L310 520L330 560M360 600L395 640M800 1600L798 1650L815 1690L850 1705M1075 90L1110 84L1150 90M1245 170L1270 240M1190 290L1230 335M960 290L995 340" />
                  </g>
                </g>
                <g class="isle"><rect v-for="(p, i) in dotsWest" :key="i" :x="p[0] - 4" :y="p[1] - 4" width="8" height="8" /></g>
                <g class="isle" transform="translate(1500)"><rect v-for="(p, i) in dotsEast" :key="i" :x="p[0] - 4" :y="p[1] - 4" width="8" height="8" /></g>
                <g transform="translate(2427 858)"><path d="M0 20V46" stroke="#e4e4e4" stroke-width="8" /><path d="M5 22V50" stroke="#7b8a78" stroke-width="3" /><circle r="25" fill="#f4777c" stroke="#c0181d" stroke-width="6" /><path d="M-14-5Q0-24 14-5Z" fill="#ffb2b2" opacity=".7" /><path d="M-15 9H15" stroke="#faa2a5" stroke-width="5" /></g>
                <text class="credit" x="2482" y="1716" textLength="515">Geonames.org</text>
              </svg>

              <div class="row location"><label class="l-loc">Location:</label><div class="entry">Taipei</div></div>
              <div class="row mode">
                <label>Set the time:</label>
                <i class="radio" /><span class="manual">Manually</span>
                <i class="radio sel" /><span class="auto">Automatically from the Internet</span>
              </div>
              <div class="row when">
                <label>Time:</label>
                <div class="spin"><span class="t">{{ stepper.time }}</span><i class="minus" /><i class="plus" /></div>
                <label class="dim">Date:</label>
                <div class="spin s2"><span class="d">{{ stepper.date }}</span><i class="minus" /><i class="plus" /></div>
              </div>
            </div>
            <div class="popup"><span class="city">Taipei</span><span class="where">(Taipei, Taiwan)</span></div>
          </div>
        </section>
      </div>
    </section>
  </main>
</template>

<style>
body { background: #fff; }
</style>

<style scoped>
* { box-sizing: border-box; }
.stage { width: 1824px; height: 1500px; padding: 75px 0 0 111px; overflow: hidden; background: #fff; font-family: "Noto Sans", "Open Sans", sans-serif; font-size: 28px; color: #4c4c4c; white-space: nowrap; }
.window { width: 1602px; height: 1277px; border: 1px solid #b3b3b3; border-radius: 11px; overflow: hidden; box-shadow: 0 42px 66px rgba(0,0,0,.4), 0 4px 46px rgba(0,0,0,.17); display: flex; flex-direction: column; }
.mac-bar { height: 75px; flex: none; display: grid; grid-template-columns: 1fr auto 1fr; align-items: center; background: linear-gradient(#e8e8e8, #cecece); border-top: 1px solid #f6f6f6; border-bottom: 2px solid #b4b4b0; }
.mac-bar h1 { margin: 0; font: 400 31.500px "Liberation Sans", Arial, sans-serif; color: #4a4a4a; position: relative; left: 5px; }
.lights { display: flex; gap: 16px; padding-left: 26px; }
.lights i { width: 24px; height: 24px; border-radius: 50%; border: 1px solid; }
.red { background: #fc605c; border-color: #e2463f !important; }
.amber { background: #fdbc40; border-color: #dfa023 !important; }
.lime { background: #34c84a; border-color: #24a732 !important; }
.off { background: #cfcfcf; border: 2px solid #bcbcbc !important; }
.mac-tools { display: flex; justify-content: flex-end; align-items: center; gap: 16px; padding-right: 16px; }
.panel { height: 48px; flex: none; display: flex; align-items: center; justify-content: space-between; padding-left: 12px; padding-right: 16px; background: linear-gradient(#5b594f, #3f3e39); color: #dfdbd2; border-top: 1px solid #6a685b; }
.panel-title, .app-bar b { font-weight: 700; font-size: 27.500px; letter-spacing: .85px; color: #dfdbd2; text-shadow: 0 -2px 1px #2d2c29; padding-bottom: 1px; }
.indicators { display: flex; align-items: center; }
.i-net { margin-right: 26px; }
.i-lang { width: 40px; height: 41px; border-radius: 3px; background: #dfdbd2; color: #3c3b37; font-size: 25px; line-height: 42px; text-align: center; letter-spacing: -.8px; margin-right: 26px; font-weight: 500; }
.i-bat { margin-right: 24px; }
.i-vol { margin-right: 31px; }
.i-time { width: 105px; margin-right: 26px; padding-bottom: 2px; }
.desktop { flex: 1; display: flex; min-height: 0; }
.dock { width: 130px; flex: none; display: flex; flex-direction: column; align-items: center; padding-top: 12px; gap: 14px; background: linear-gradient(#340f30, transparent 14px), linear-gradient(90deg, #651455, #550d48); border-right: 2px solid #6b3868; }
.defs { position: absolute; }
.tile { width: 104px; height: 104px; flex: none; }
.plate { fill: url(#gloss); stroke: #8f5a8a; stroke-width: 3; }
.stack { width: 130px; height: 326px; flex: none; margin: -13px 0 0 2px; }
.amazon { font: 700 215px "Open Sans", sans-serif; fill: #2d2f32; }
.app { flex: 1; min-width: 0; display: flex; flex-direction: column; background: #340f30; }
.app-bar { height: 58px; flex: none; display: flex; align-items: center; padding-left: 16px; gap: 8px; background: linear-gradient(#5b594f, #3f3e39); border-top: 2px solid #66645a; border-top-left-radius: 10px; }
.app-bar b { margin-left: 16px; }
.wb { width: 30px; height: 30px; border-radius: 50%; background: linear-gradient(#8a8982, #63625c); box-shadow: 0 0 0 1.500px #33322e; }
.wb.close { background: linear-gradient(#f47c50, #e04b1c); }
.wb svg { display: block; width: 30px; height: 30px; fill: none; stroke: #3a3935; stroke-width: 2; }
.toolbar { height: 100px; flex: none; padding: 15px 0 0 24px; background: linear-gradient(#3b3a36, #55534a); border-bottom: 2px solid #3c3b37; color: #dfdbd2; text-shadow: 0 -2px 1px #35342f; }
.crumbs { width: 388px; height: 68px; display: flex; border: 2px solid #34332f; border-radius: 8px; box-shadow: inset 0 0 0 1.500px #5b594f; background: linear-gradient(#43423d, #4c4b44); line-height: 64px; }
.c1 { width: 189px; padding-left: 14px; border-right: 2px solid #35342f; box-shadow: 1px 0 #605e55; letter-spacing: .8px; }
.c2 { padding-left: 17px; letter-spacing: .2px; }
.body { flex: 1; position: relative; background: #f2f1ef; border: solid #c4c1be; border-width: 2px 0 2px 2px; border-top-left-radius: 5px; padding-left: 20px; }
.tabs { display: flex; height: 54px; margin-top: 20px; }
.tab { width: 104px; line-height: 55px; padding-left: 15px; letter-spacing: .4px; border-bottom: 2px solid #c3c1bf; background: linear-gradient(transparent, #d3d1cf) right / 2px 100% no-repeat; }
.tab.on { width: 200px; line-height: 49px; padding-left: 16px; letter-spacing: .2px; border: 2px solid #c3c1bf; border-bottom: 0; border-radius: 9px 9px 0 0; background: linear-gradient(#f7f6f5, #f2f1ef 10px); }
.rest { flex: 1; border-bottom: 2px solid #c3c1bf; }
.frame { display: flow-root; height: 896px; border-left: 2px solid #c3c1bf; border-bottom: 2px solid #c3c1bf; border-bottom-left-radius: 5px; }
.map { display: block; margin: 34px 0 0 328px; }
.zone { fill: none; stroke: #788196; stroke-opacity: .6; stroke-width: 4; }
.land { fill: #fff; stroke: #cfdad9; stroke-width: 3; stroke-linejoin: round; }
.sea { fill: #94a8c9; stroke: #b8c6d6; stroke-width: 2; }
.border { fill: none; stroke: #dde3e0; stroke-width: 4; stroke-linejoin: round; }
.picked { fill: #8ccd57; stroke: #93c873; stroke-width: 2; }
.isle { fill: #e8eeee; }
.fjord { fill: none; stroke: #a7b8bf; stroke-width: 4; stroke-opacity: .8; }
.credit { font: 78px "Noto Sans", sans-serif; fill: #d5dde9; fill-opacity: .8; }
.row { display: flex; align-items: center; }
.row label { width: 193px; text-align: right; flex: none; letter-spacing: .45px; }
.row .l-loc { letter-spacing: .9px; }
.location { margin-top: 14px; height: 54px; }
.entry { flex: 1; height: 54px; margin-left: 15px; border: 2px solid #df8663; border-right: 0; border-radius: 9px 0 0 9px; background: linear-gradient(#f8f3f1, #f4f4f4 6px, #f4f4f4); line-height: 49px; padding-left: 12px; color: #3c3c3c; letter-spacing: .6px; }
.mode { margin-top: 43px; height: 32px; }
.mode label, .mode span { position: relative; top: -1px; }
.manual { letter-spacing: .65px; }
.auto { letter-spacing: .62px; }
.radio { width: 32px; height: 32px; flex: none; margin-left: 19px; margin-right: 12px; border-radius: 50%; border: 2px solid #9d9b98; background: #f3f3f3; }
.radio.sel { border-color: #9c3f1a; background: radial-gradient(#f4f1ef 5px, #cc5022 7px, #d2602f); }
.when { margin-top: 45px; height: 54px; }
.spin { width: 444px; height: 54px; margin-left: 15px; border: 2px solid #c3c1bf; border-radius: 9px; background: #f4f4f4; display: flex; color: #8b8b8b; line-height: 50px; }
.spin span { flex: 1; text-align: right; padding-right: 14px; letter-spacing: .1px; }
.spin i { width: 58px; border-left: 2px solid #dad8d6; background: linear-gradient(#a29d98, #a29d98) 16px 23px / 20px 4px no-repeat; }
.spin .plus { width: 57px; background: linear-gradient(#a29d98, #a29d98) 16px 23px / 20px 4px no-repeat, linear-gradient(#a29d98, #a29d98) 24px 15px / 4px 20px no-repeat; }
.row .dim { width: 100px; color: #96938f; letter-spacing: .8px; }
.popup { position: absolute; left: 33px; top: 760px; width: 1434px; height: 44px; border: 1px solid #c9c5c1; border-top-width: 2px; background: linear-gradient(#e45f2a, #ea6e3c 3px, #f78353); color: #fff; box-shadow: 0 16px 40px rgba(0,0,0,.38), 0 4px 14px rgba(0,0,0,.16); padding-left: 6px; line-height: 40px; display: flex; align-items: baseline; }
.city { letter-spacing: .45px; }
.where { font-size: 23.500px; margin-left: 7px; letter-spacing: -.1px; }
</style>
